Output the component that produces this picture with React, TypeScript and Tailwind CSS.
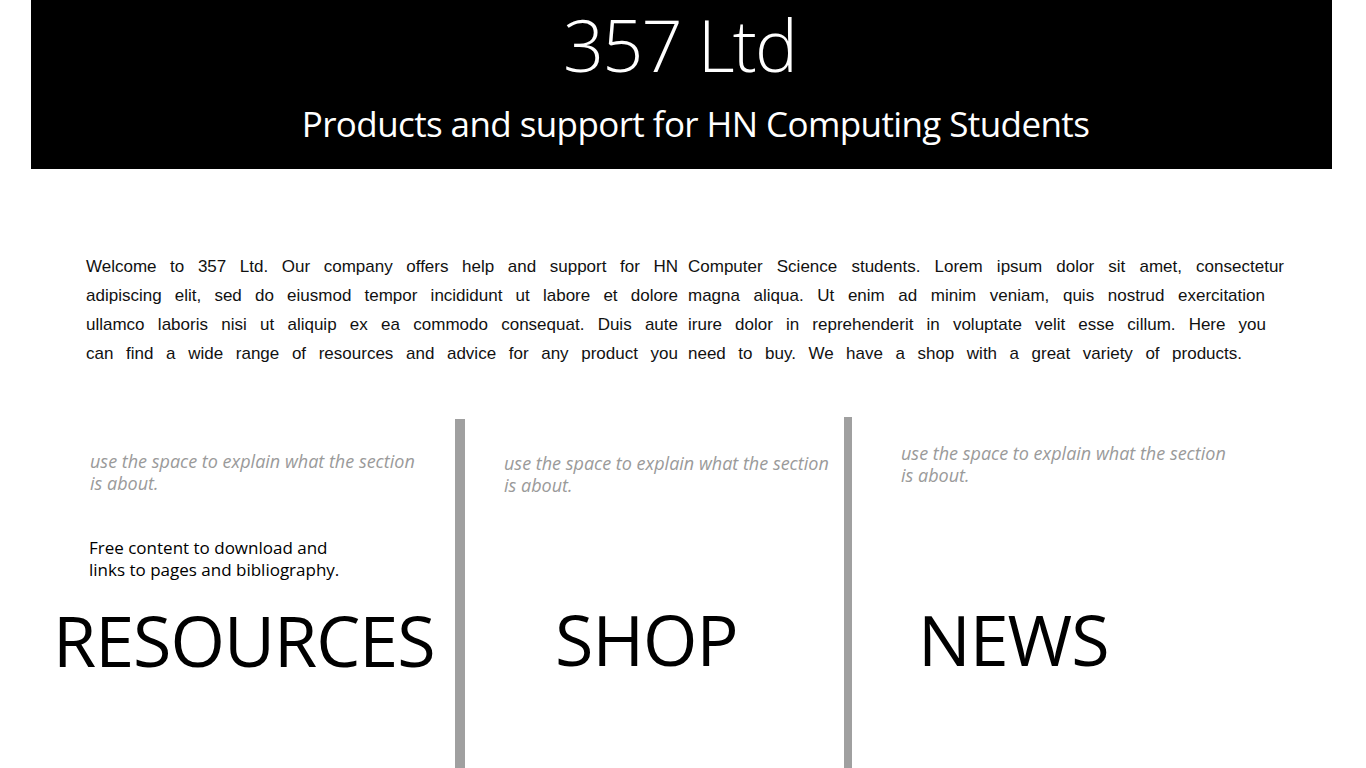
import React from 'react';

const lines: [string, string, string][] = [
  [
    'Welcome to 357 Ltd. Our company offers help and support for HN',
    'Computer Science students. Lorem ipsum dolor sit amet, consectetur',
    'w-[596px]',
  ],
  [
    'adipiscing elit, sed do eiusmod tempor incididunt ut labore et dolore',
    'magna aliqua. Ut enim ad minim veniam, quis nostrud exercitation',
    'w-[577px]',
  ],
  [
    'ullamco laboris nisi ut aliquip ex ea commodo consequat. Duis aute',
    'irure dolor in reprehenderit in voluptate velit esse cillum. Here you',
    'w-[578px]',
  ],
  [
    'can find a wide range of resources and advice for any product you',
    'need to buy. We have a shop with a great variety of products.',
    'w-[554px]',
  ],
];

const segoe = "font-['Open_Sans','Noto_Sans',sans-serif]";

const App: React.FC = () => {
  return (
    <div className={`min-h-[768px] bg-white overflow-hidden ${segoe}`}>
      {/* Banner */}
      <header className="mx-[31px] w-[1301px] h-[169px] bg-black text-white flex flex-col items-center">
        <h1 className="text-[72px] font-light leading-[84px] mt-[2px] ml-[-4px] tracking-[-1.8px]">357 Ltd</h1>
        <p className="text-[35px] font-normal leading-[44px] mt-[16px] ml-[28px] tracking-[-0.6px]">
          Products and support for HN Computing Students
        </p>
      </header>

      {/* Intro */}
      <section className="pt-[83px] pl-[86px] font-['Liberation_Sans',Arial,sans-serif] text-[17px] leading-[29px] text-[#111]">
        {lines.map(([left, right, w]) => (
          <div key={left} className="flex">
            <span className="w-[592px] text-justify [text-align-last:justify]">{left}</span>
            <span className={`${w} ml-[10px] text-justify [text-align-last:justify]`}>{right}</span>
          </div>
        ))}
      </section>

      {/* Sections */}
      <section className="mt-[49px] flex h-[356px]">
        <div className="w-[455px] shrink-0 flex flex-col">
          <p className="ml-[90px] mt-[33px] w-[330px] italic text-[18px] leading-[22px] text-[#9a9a9a]">
            use the space to explain what the section is about.
          </p>
          <p className="ml-[89px] mt-[43px] w-[260px] text-[17px] leading-[22px] text-black">
            Free content to download and links to pages and bibliography.
          </p>
          <h2 className="ml-[53px] mt-[24px] text-[70px] leading-none tracking-[-1px] text-black">RESOURCES</h2>
        </div>
        <div className="w-[10px] shrink-0 mt-[2px] bg-[#a0a0a0]" />
        <div className="w-[379px] shrink-0 flex flex-col">
          <p className="ml-[39px] mt-[35px] w-[330px] italic text-[18px] leading-[22px] text-[#9a9a9a]">
            use the space to explain what the section is about.
          </p>
          <h2 className="ml-[90px] mt-[108px] text-[70px] leading-none tracking-[-1px] text-black">SHOP</h2>
        </div>
        <div className="w-[8px] shrink-0 bg-[#a0a0a0]" />
        <div className="flex-1 flex flex-col">
          <p className="ml-[49px] mt-[25px] w-[330px] italic text-[18px] leading-[22px] text-[#9a9a9a]">
            use the space to explain what the section is about.
          </p>
          <h2 className="ml-[66px] mt-[118px] text-[70px] leading-none tracking-[-1px] text-black">NEWS</h2>
        </div>
      </section>
    </div>
  );
};

export default App;
